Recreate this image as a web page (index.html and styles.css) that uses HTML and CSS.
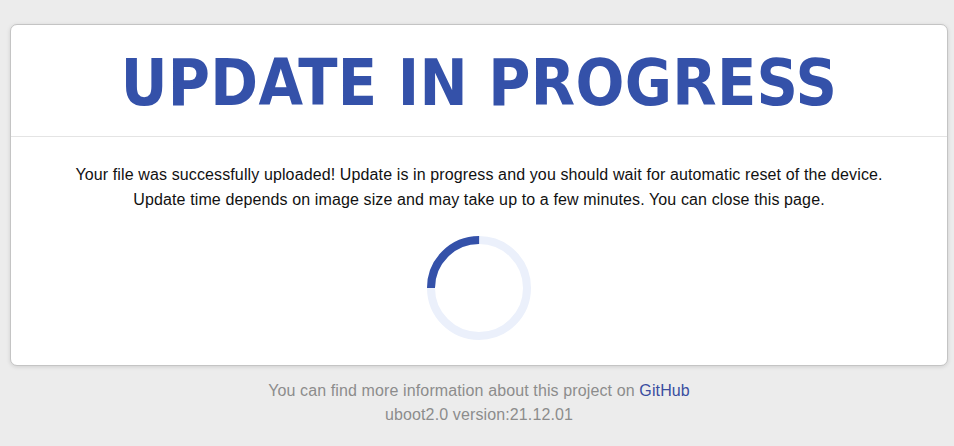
FILE: index.html
```html
<!DOCTYPE html>
<html lang="en">
<head>
<meta charset="utf-8">
<title>Update in progress</title>
<link rel="stylesheet" href="styles.css">
</head>
<body>
<main class="page">
  <section class="card">
    <header class="card-header">
      <h1 class="title">UPDATE IN PROGRESS</h1>
    </header>
    <div class="card-body">
      <p class="message">Your file was successfully uploaded! Update is in progress and you should wait for automatic reset of the device.<br>Update time depends on image size and may take up to a few minutes. You can close this page.</p>
      <svg class="spinner" width="104" height="104" viewBox="0 0 104 104" aria-hidden="true">
        <circle class="spinner-track" cx="52" cy="52" r="48"/>
        <circle class="spinner-arc" cx="52" cy="52" r="48" transform="rotate(180 52 52)"/>
      </svg>
    </div>
  </section>
  <footer class="footer">
    <p class="footer-line">You can find more information about this project on <a class="footer-link" href="#">GitHub</a></p>
    <p class="footer-line">uboot2.0 version:21.12.01</p>
  </footer>
</main>
</body>
</html>
```
FILE: styles.css
```css
html, body {
  margin: 0;
  padding: 0;
  background: #ececec;
  font-family: "Liberation Sans", Arial, sans-serif;
}

.page {
  padding: 24px 6px 0 10px;
}

.card {
  background: #fff;
  border: 1px solid #c4c4c4;
  border-radius: 7px;
  box-shadow: 0 1px 4px rgba(0, 0, 0, 0.12);
}

.card-header {
  height: 111px;
  display: flex;
  align-items: center;
  justify-content: center;
  border-bottom: 1px solid #e4e4e4;
}

.title {
  margin: 0;
  font-family: "DejaVu Sans Condensed", "DejaVu Sans", sans-serif;
  font-stretch: condensed;
  font-weight: bold;
  font-size: 64px;
  letter-spacing: 0.3px;
  line-height: 1;
  color: #3451a9;
  padding-top: 5px;
}

.card-body {
  display: flex;
  flex-direction: column;
  align-items: center;
  padding: 25px 0 25px;
}

.message {
  margin: 0 0 24px;
  font-size: 16px;
  letter-spacing: 0.12px;
  line-height: 25px;
  color: #111;
  text-align: center;
}

.spinner {
  display: block;
}

.spinner-track {
  fill: none;
  stroke: #ebf0fb;
  stroke-width: 8;
}

.spinner-arc {
  fill: none;
  stroke: #3451a9;
  stroke-width: 8;
  stroke-dasharray: 75.4 301.6;
}

.footer {
  padding-top: 13px;
  text-align: center;
  color: #8c8c8c;
  font-size: 16px;
  letter-spacing: 0.12px;
  line-height: 24px;
}

.footer-line {
  margin: 0;
}

.footer-link {
  color: #3a4ea0;
  text-decoration: none;
}
```
